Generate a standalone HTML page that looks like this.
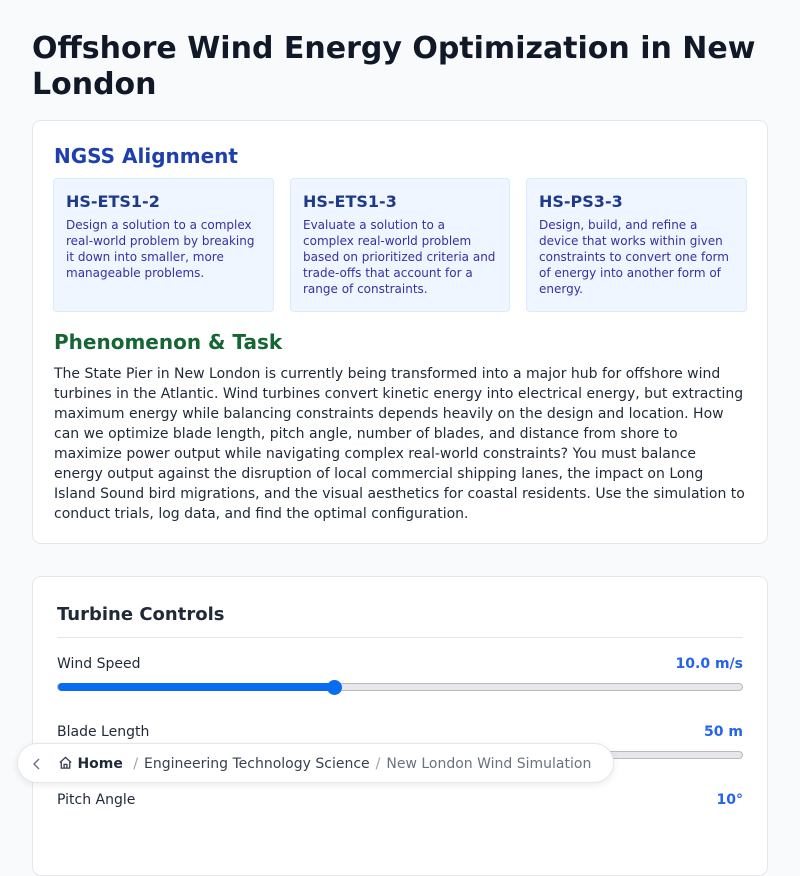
<!DOCTYPE html>
<html><head><meta charset="utf-8">
<style>
*{box-sizing:border-box;margin:0;padding:0}
body{width:800px;height:800px;overflow:hidden;background:#f8fafc;font-family:"DejaVu Sans","Liberation Sans",sans-serif;color:#1f2937;position:relative}
h1{position:absolute;left:32px;top:31px;width:750px;font-size:30px;line-height:36px;font-weight:bold;color:#111827}
.card{position:absolute;left:32px;width:736px;background:#fff;border:1px solid #e5e7eb;border-radius:9px}
.c1{top:120px;height:424px}
.c2{top:576px;height:300px}
.h2{position:absolute;font-size:20px;font-weight:bold;line-height:24px}
.box{position:absolute;top:57px;width:221px;height:134px;background:#eff6ff;border:1px solid #dbeafe;border-radius:4px;padding:13px 12px}
.box b{display:block;font-size:16px;line-height:20px;color:#1e3a8a;margin-bottom:5px}
.box p{font-size:12px;line-height:16px;color:#3730a3}
.para{position:absolute;left:21px;top:243px;width:694px;font-size:14px;line-height:20px;color:#1f2937}
.lbl{position:absolute;left:24px;font-size:14px;color:#1f2937}
.val{position:absolute;right:24px;font-size:14px;font-weight:bold;color:#2563eb}
.track{position:absolute;left:24px;width:686px;height:8px;border-radius:4px;background:#e5e7eb;border:1px solid #bbb}
.fill{position:absolute;left:0;top:-1px;height:8px;border-radius:4px;background:#0a6cf0}
.thumb{position:absolute;width:15px;height:15px;border-radius:50%;background:#0a6cf0;top:-4.5px}
.bc{position:absolute;left:17px;top:743px;width:597px;height:40px;background:#fff;border:1px solid #e5e7eb;border-radius:20px;box-shadow:0 2px 8px rgba(0,0,0,.08);font-size:14px;line-height:40px;color:#374151;white-space:nowrap}
</style></head><body>
<h1>Offshore Wind Energy Optimization in New London</h1>
<div class="card c1">
 <div class="h2" style="left:21px;top:23px;color:#1e40af">NGSS Alignment</div>
 <div class="box" style="left:20px"><b>HS-ETS1-2</b><p>Design a solution to a complex real-world problem by breaking it down into smaller, more manageable problems.</p></div>
 <div class="box" style="left:257px;width:220px"><b>HS-ETS1-3</b><p>Evaluate a solution to a complex real-world problem based on prioritized criteria and trade-offs that account for a range of constraints.</p></div>
 <div class="box" style="left:493px"><b>HS-PS3-3</b><p>Design, build, and refine a device that works within given constraints to convert one form of energy into another form of energy.</p></div>
 <div class="h2" style="left:21px;top:209px;color:#166534">Phenomenon &amp; Task</div>
 <div class="para">The State Pier in New London is currently being transformed into a major hub for offshore wind turbines in the Atlantic. Wind turbines convert kinetic energy into electrical energy, but extracting maximum energy while balancing constraints depends heavily on the design and location. How can we optimize blade length, pitch angle, number of blades, and distance from shore to maximize power output while navigating complex real-world constraints? You must balance energy output against the disruption of local commercial shipping lanes, the impact on Long Island Sound bird migrations, and the visual aesthetics for coastal residents. Use the simulation to conduct trials, log data, and find the optimal configuration.</div>
</div>
<div class="card c2">
 <div style="position:absolute;left:24px;top:27px;font-size:18px;font-weight:bold;color:#1f2937">Turbine Controls</div>
 <div style="position:absolute;left:24px;right:24px;top:60px;height:1px;background:#e5e7eb"></div>
 <div class="lbl" style="top:79px">Wind Speed</div><div class="val" style="top:79px">10.0 m/s</div>
 <div class="track" style="top:106px"><div class="fill" style="width:276px"></div><div class="thumb" style="left:269px"></div></div>
 <div class="lbl" style="top:147px">Blade Length</div><div class="val" style="top:147px">50 m</div>
 <div class="track" style="top:174px"></div>
 <div class="lbl" style="top:215px">Pitch Angle</div><div class="val" style="top:215px">10°</div>
</div>
<div class="bc">
 <span style="position:absolute;left:14px;color:#6b7280">
  <svg width="10" height="14" viewBox="0 0 10 14" style="vertical-align:middle"><path d="M7 2 L2 7 L7 12" fill="none" stroke="#6b7280" stroke-width="1.4"/></svg></span>
 <span style="position:absolute;left:40px">
  <svg width="15" height="15" viewBox="0 0 16 16" style="vertical-align:-2px"><path d="M2 8 L8 2.5 L14 8 M3.5 6.8 V14 H12.5 V6.8 M6.5 14 V10 H9.5 V14" fill="none" stroke="#374151" stroke-width="1.4"/></svg>
  <b style="color:#1f2937">Home</b>
  <span style="color:#9ca3af;margin:0 6px">/</span>Engineering Technology Science<span style="color:#9ca3af;margin:0 6px">/</span><span style="color:#6b7280">New London Wind Simulation</span>
 </span>
</div>
</body></html>
